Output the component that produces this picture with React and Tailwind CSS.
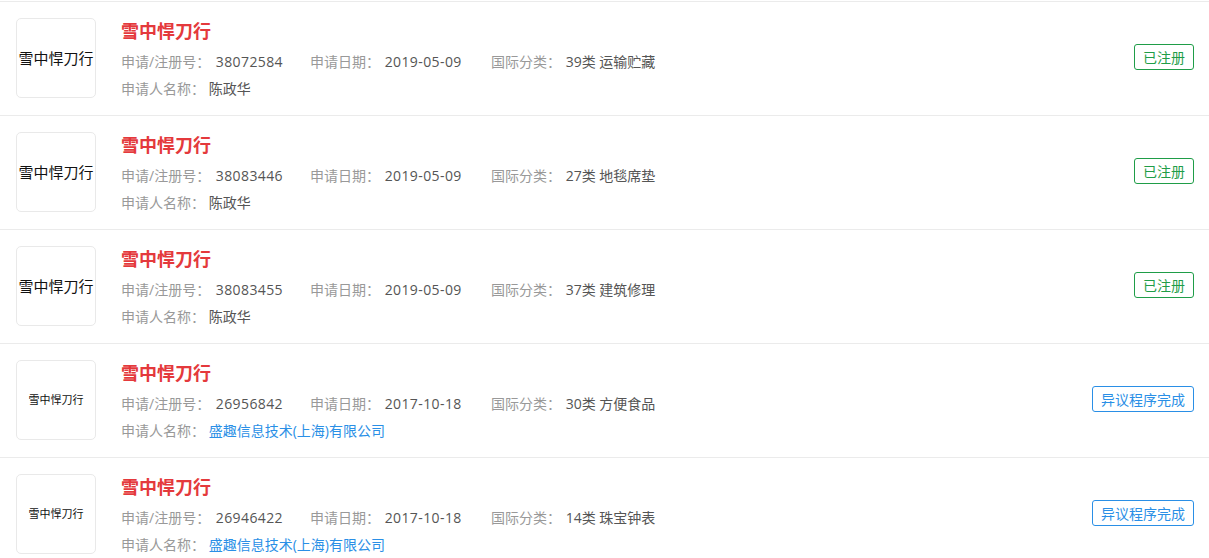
import React from 'react';

const ITEMS = [
  { no: '38072584', date: '2019-05-09', cls: '39类 运输贮藏', owner: '陈政华', status: 'ok', small: false },
  { no: '38083446', date: '2019-05-09', cls: '27类 地毯席垫', owner: '陈政华', status: 'ok', small: false },
  { no: '38083455', date: '2019-05-09', cls: '37类 建筑修理', owner: '陈政华', status: 'ok', small: false },
  { no: '26956842', date: '2017-10-18', cls: '30类 方便食品', owner: '盛趣信息技术(上海)有限公司', status: 'objection', small: true },
  { no: '26946422', date: '2017-10-18', cls: '14类 珠宝钟表', owner: '盛趣信息技术(上海)有限公司', status: 'objection', small: true },
];

function StatusTag({ status }) {
  if (status === 'ok') {
    return (
      <span className="h-[26px] px-2 flex items-center border border-[#1f9d48] rounded-[3px] text-[14px] text-[#1f9d48]">
        已注册
      </span>
    );
  }
  return (
    <span className="h-[26px] px-2 flex items-center border border-[#2a8fe6] rounded-[3px] text-[14px] text-[#2a8fe6]">
      异议程序完成
    </span>
  );
}

function Row({ item }) {
  const ownerIsCompany = item.owner.length > 4;
  return (
    <div className="border-t border-[#ebebeb] h-[114px] flex items-start pl-4 pr-[15px]">
      <div className="mt-4 w-[80px] h-[80px] shrink-0 border border-[#e9e9e9] rounded-[5px] flex items-center justify-center">
        <span className={item.small ? 'text-[11px] text-[#111]' : 'text-[15px] text-[#111]'}>雪中悍刀行</span>
      </div>
      <div className="ml-[25px] flex-1 min-w-0 pt-[16px]">
        <div className="h-[26px] leading-[26px] text-[18px] font-bold text-[#e4393c]">雪中悍刀行</div>
        <div className="mt-[8px] h-[20px] leading-[20px] flex text-[14px]">
          <div className="w-[189px]">
            <span className="text-[#999]">申请/注册号： </span>
            <span className="ml-[2px] tracking-[0.4px] text-[#555]">{item.no}</span>
          </div>
          <div className="w-[181px]">
            <span className="text-[#999]">申请日期： </span>
            <span className="ml-px tracking-[0.4px] text-[#555]">{item.date}</span>
          </div>
          <div>
            <span className="text-[#999]">国际分类： </span>
            <span className="ml-px text-[#555]">{item.cls}</span>
          </div>
        </div>
        <div className="mt-[7px] h-[20px] leading-[20px] text-[14px]">
          <span className="text-[#999]">申请人名称： </span>
          <span className={ownerIsCompany ? 'text-[#2a8fe6]' : 'text-[#555]'}>{item.owner}</span>
        </div>
      </div>
      <div className="self-center shrink-0 -mt-[3px]">
        <StatusTag status={item.status} />
      </div>
    </div>
  );
}

export default function App() {
  return (
    <div
      className="w-[1209px] h-[558px] overflow-hidden bg-white pt-px"
      style={{ fontFamily: '"Open Sans", "Noto Sans CJK SC", sans-serif' }}
    >
      {ITEMS.map((item) => (
        <Row key={item.no} item={item} />
      ))}
    </div>
  );
}
